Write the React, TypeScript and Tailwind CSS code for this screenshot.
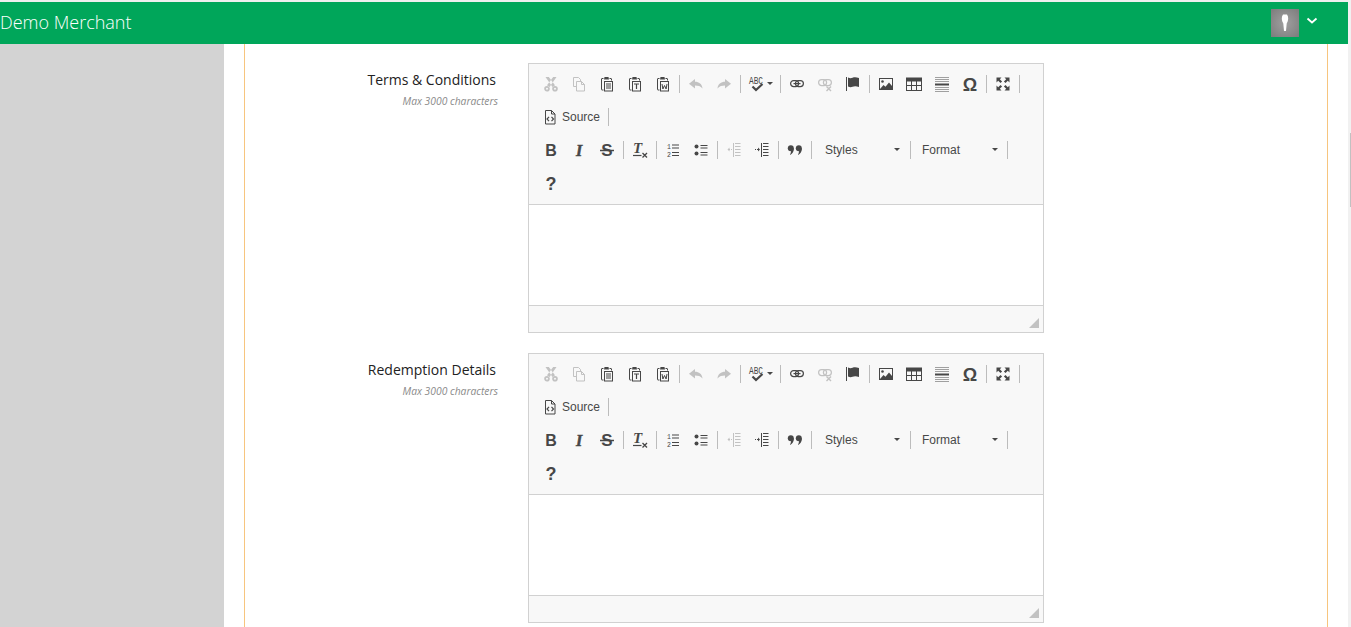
import type { ReactNode } from 'react'

const sans = { fontFamily: '"Liberation Sans", Arial, sans-serif' }

function Glyph({ children, off }: { children: ReactNode; off?: boolean }) {
  return (
    <svg
      viewBox="0 0 16 16"
      width={16}
      height={16}
      className={off ? 'overflow-visible text-[#474747] opacity-30' : 'overflow-visible text-[#474747]'}
      fill="none"
      stroke="none"
    >
      {children}
    </svg>
  )
}

function ClipBase() {
  return (
    <>
      <path d="M4.5 2.5H3a.5.5 0 0 0-.5.5v10.500a.5.5 0 0 0 .5.5h1.500M10.500 2.500H12a.5.5 0 0 1 .5.5v1.500" stroke="currentColor" strokeWidth="1" />
      <path d="M5 3.500 5.500 1h4l.5 2.500z" fill="currentColor" />
      <rect x="5.500" y="5.500" width="8" height="9.500" stroke="currentColor" strokeWidth="1" fill="none" />
    </>
  )
}

const icons: Record<string, ReactNode> = {
  cut: (
    <Glyph off>
      <path d="M2.500 1 9.500 11l2.500-1.700L5.800 1zM13.500 1 6.500 11 4 9.300 10.200 1z" fill="currentColor" />
      <circle cx="4" cy="12.800" r="1.900" stroke="currentColor" strokeWidth="1.800" />
      <circle cx="12" cy="12.800" r="1.900" stroke="currentColor" strokeWidth="1.800" />
    </Glyph>
  ),
  copy: (
    <Glyph off>
      <path d="M5.500 10.500h-3v-9h5l2 2v2M5.500 5.500h5l3 3v6.500h-8z" stroke="currentColor" strokeWidth="1" />
      <path d="M10.500 5.500v3h3" stroke="currentColor" strokeWidth="1" />
    </Glyph>
  ),
  paste: (
    <Glyph>
      <ClipBase />
      <path d="M7 8h5M7 10h5M7 12h5" stroke="currentColor" strokeWidth="1" />
    </Glyph>
  ),
  pasteText: (
    <Glyph>
      <ClipBase />
      <path d="M7 8h5M9.500 8v5" stroke="currentColor" strokeWidth="1.200" />
    </Glyph>
  ),
  pasteWord: (
    <Glyph>
      <ClipBase />
      <path d="M7 8l.9 5L9.500 9.500 11.100 13 12 8" stroke="currentColor" strokeWidth="1" />
    </Glyph>
  ),
  undo: (
    <Glyph off>
      <path d="M7 3 1 7.800 7 12.500V9.500c3 0 5.500.6 7.500 3C14 8 11 5.800 7 5.800z" fill="currentColor" />
    </Glyph>
  ),
  redo: (
    <Glyph off>
      <path d="M9 3l6 4.800L9 12.500V9.500c-3 0-5.500.6-7.500 3C2 8 5 5.800 9 5.800z" fill="currentColor" />
    </Glyph>
  ),
  spell: (
    <Glyph>
      <text x="0" y="8" fontSize="10" fill="currentColor" fontFamily="'Liberation Mono', monospace" textLength="14" lengthAdjust="spacingAndGlyphs">
        ABC
      </text>
      <path d="M3.500 10.500 7 14l6.500-6" stroke="currentColor" strokeWidth="2.200" />
    </Glyph>
  ),
  link: (
    <Glyph>
      <rect x="1.600" y="4.600" width="8" height="6" rx="3" stroke="currentColor" strokeWidth="1.200" />
      <rect x="6.400" y="4.600" width="8" height="6" rx="3" stroke="currentColor" strokeWidth="1.200" />
      <path d="M4.500 7.600h7" stroke="currentColor" strokeWidth="1.200" />
    </Glyph>
  ),
  unlink: (
    <Glyph off>
      <rect x="1.600" y="3.600" width="8" height="6" rx="3" stroke="currentColor" strokeWidth="1.200" />
      <rect x="6.400" y="3.600" width="8" height="6" rx="3" stroke="currentColor" strokeWidth="1.200" />
      <path d="M9.500 10.500l4.500 4.500M14 10.500l-4.500 4.500" stroke="currentColor" strokeWidth="1.400" />
    </Glyph>
  ),
  flag: (
    <Glyph>
      <path d="M1.500 1v14" stroke="currentColor" strokeWidth="1" />
      <path d="M3 1.500c2 .8 3 .8 4.500.2 2-.8 4-.6 6.500.3V11c-2.500-1-4.500-1.100-6.500-.3-1.500.6-2.500.6-4.500-.2z" fill="currentColor" />
    </Glyph>
  ),
  image: (
    <Glyph>
      <rect x="1.500" y="2.500" width="13" height="11" stroke="currentColor" strokeWidth="1" />
      <circle cx="4.500" cy="5.500" r="1.300" fill="currentColor" />
      <path d="M2 13l3.500-4 2 1.800L11 6.500l3 3.500v3.500z" fill="currentColor" />
    </Glyph>
  ),
  table: (
    <Glyph>
      <rect x="0.500" y="2" width="15" height="12.500" stroke="currentColor" strokeWidth="1" />
      <rect x="0.500" y="2" width="15" height="3.500" fill="currentColor" />
      <path d="M5.500 5v9M10.500 5v9M1 9.500h14" stroke="currentColor" strokeWidth="1" />
    </Glyph>
  ),
  hr: (
    <Glyph>
      <path d="M1 1.500h14M1 3.500h14M1 5.500h14M1 11.500h14M1 13.500h14M1 15.500h14" stroke="currentColor" strokeWidth="1" opacity="0.5" />
      <path d="M1 8.500h14" stroke="currentColor" strokeWidth="2" />
    </Glyph>
  ),
  omega: (
    <Glyph>
      <text x="8" y="14.500" textAnchor="middle" fontSize="18" fontWeight="700" fill="currentColor" fontFamily="'Liberation Sans', sans-serif">
        Ω
      </text>
    </Glyph>
  ),
  max: (
    <Glyph>
      <path d="M1.500 1.500h5l-1.700 1.700 2.300 2.300-1.600 1.600-2.300-2.300-1.700 1.700zM14.500 1.500v5l-1.700-1.700-2.300 2.300-1.600-1.600 2.300-2.300-1.700-1.700zM1.500 14.500v-5l1.700 1.700 2.300-2.300 1.600 1.600-2.300 2.300 1.700 1.700zM14.500 14.500h-5l1.700-1.700-2.300-2.300 1.600-1.600 2.300 2.300 1.700-1.700z" fill="currentColor" />
    </Glyph>
  ),
  source: (
    <Glyph>
      <path d="M3.500 1.500h6l3.500 3.500v10h-9.500zM9.500 1.500V5H13" stroke="currentColor" strokeWidth="1" />
      <path d="M7 7.800 5 10l2 2.200M9.500 7.800l2 2.200-2 2.200" stroke="currentColor" strokeWidth="1.200" />
    </Glyph>
  ),
  bold: (
    <Glyph>
      <text x="8" y="14" textAnchor="middle" fontSize="16" fontWeight="700" fill="currentColor" fontFamily="'Liberation Sans', sans-serif">
        B
      </text>
    </Glyph>
  ),
  italic: (
    <Glyph>
      <text x="8" y="13.500" textAnchor="middle" fontSize="16" fontWeight="700" fontStyle="italic" fill="currentColor" stroke="currentColor" strokeWidth="0.5" fontFamily="'Liberation Serif', serif">
        I
      </text>
    </Glyph>
  ),
  strike: (
    <Glyph>
      <text x="8" y="14" textAnchor="middle" fontSize="17" fontWeight="700" fill="currentColor" fontFamily="'Liberation Sans', sans-serif">
        S
      </text>
      <path d="M1 8.500h14" stroke="currentColor" strokeWidth="1.500" />
    </Glyph>
  ),
  clear: (
    <Glyph>
      <text x="5.500" y="11" textAnchor="middle" fontSize="15" fontWeight="700" fontStyle="italic" fill="currentColor" fontFamily="'Liberation Serif', serif">
        T
      </text>
      <path d="M1 13.500h8.500" stroke="currentColor" strokeWidth="1.200" />
      <path d="M10.500 11l4.500 4.500M15 11l-4.500 4.500" stroke="currentColor" strokeWidth="1.300" />
    </Glyph>
  ),
  ol: (
    <Glyph>
      <text x="2" y="7" fontSize="6.500" fill="currentColor" fontFamily="'Liberation Mono', monospace">1</text>
      <text x="2" y="14.500" fontSize="6.500" fill="currentColor" fontFamily="'Liberation Mono', monospace">2</text>
      <path d="M7 3h7M7 6h7M7 10.500h7M7 13.500h7" stroke="currentColor" strokeWidth="1.200" />
    </Glyph>
  ),
  ul: (
    <Glyph>
      <circle cx="3.500" cy="4.500" r="2" fill="currentColor" />
      <circle cx="3.500" cy="11.500" r="2" fill="currentColor" />
      <path d="M7.500 3.500h7M7.500 6h7M7.500 10.500h7M7.500 13h7" stroke="currentColor" strokeWidth="1.200" />
    </Glyph>
  ),
  outdent: (
    <Glyph off>
      <path d="M9 1.500h5.500M9 4.500h5.500M9 7.500h5.500M9 10.500h5.500M9 13.500h5.500M7.500 1v14" stroke="currentColor" strokeWidth="1" />
      <path d="M3 7.500h3" stroke="currentColor" strokeWidth="1" strokeDasharray="1 1" />
      <path d="M3.500 5.500 1.500 7.500l2 2z" fill="currentColor" />
    </Glyph>
  ),
  indent: (
    <Glyph>
      <path d="M9 1.500h5.500M9 4.500h5.500M9 7.500h5.500M9 10.500h5.500M9 13.500h5.500M7.500 1v14" stroke="currentColor" strokeWidth="1" />
      <path d="M1 7.500h3" stroke="currentColor" strokeWidth="1" strokeDasharray="1 1" />
      <path d="M4 5.500l2 2-2 2z" fill="currentColor" />
    </Glyph>
  ),
  quote: (
    <Glyph>
      <circle cx="3.800" cy="6.200" r="3" fill="currentColor" />
      <circle cx="11.800" cy="6.200" r="3" fill="currentColor" />
      <path d="M4.200 6.500h2.600c.1 3-1.300 5.600-4 6.500 1-1.500 1.500-3.500 1.400-6.500zM12.200 6.500h2.600c.1 3-1.300 5.600-4 6.500 1-1.500 1.500-3.500 1.400-6.500z" fill="currentColor" />
    </Glyph>
  ),
  help: (
    <Glyph>
      <text x="8" y="15" textAnchor="middle" fontSize="18" fontWeight="700" fill="currentColor" fontFamily="'Liberation Sans', sans-serif">
        ?
      </text>
    </Glyph>
  ),
}

function Btn({ name }: { name: string }) {
  return <span className="flex h-[27px] w-7 items-center justify-center">{icons[name]}</span>
}

function Sep() {
  return <span className="mx-[2px] h-[18px] w-px bg-[#bcbcbc]" />
}

function Caret() {
  return <span className="h-0 w-0 border-x-[3px] border-t-[3px] border-x-transparent border-t-[#474747]" />
}

function Row({ children }: { children: ReactNode }) {
  return <div className="flex h-[33px] items-center">{children}</div>
}

function Combo({ label, className }: { label: string; className: string }) {
  return (
    <span className={`flex h-[27px] items-center justify-between text-xs text-[#484848] ${className}`} style={sans}>
      {label}
      <Caret />
    </span>
  )
}

function Editor() {
  return (
    <div className="flex h-[270px] w-[516px] flex-col border border-[#d1d1d1] bg-white">
      <div className="h-[141px] border-b border-[#d1d1d1] bg-[#f8f8f8] pl-2 pt-[3px]">
        <Row>
          <Btn name="cut" />
          <Btn name="copy" />
          <Btn name="paste" />
          <Btn name="pasteText" />
          <Btn name="pasteWord" />
          <Sep />
          <Btn name="undo" />
          <Btn name="redo" />
          <Sep />
          <span className="flex h-[27px] w-[35px] items-center justify-center gap-[2px]">
            {icons.spell}
            <Caret />
          </span>
          <Sep />
          <Btn name="link" />
          <Btn name="unlink" />
          <Btn name="flag" />
          <Sep />
          <Btn name="image" />
          <Btn name="table" />
          <Btn name="hr" />
          <Btn name="omega" />
          <Sep />
          <Btn name="max" />
          <Sep />
        </Row>
        <Row>
          <span className="flex h-[27px] w-[69px] items-center gap-1 pl-[5px] text-xs text-[#484848]" style={sans}>
            {icons.source}
            Source
          </span>
          <Sep />
        </Row>
        <Row>
          <Btn name="bold" />
          <Btn name="italic" />
          <Btn name="strike" />
          <Sep />
          <Btn name="clear" />
          <Sep />
          <Btn name="ol" />
          <Btn name="ul" />
          <Sep />
          <Btn name="outdent" />
          <Btn name="indent" />
          <Sep />
          <Btn name="quote" />
          <Sep />
          <Combo label="Styles" className="w-[94px] pl-[11px] pr-2" />
          <Sep />
          <Combo label="Format" className="w-[92px] pl-[9px] pr-[7px]" />
          <Sep />
        </Row>
        <Row>
          <Btn name="help" />
        </Row>
      </div>
      <div className="h-[100px] bg-white" />
      <div className="relative flex-1 border-t border-[#d1d1d1] bg-[#f8f8f8]">
        <span className="absolute bottom-1 right-1 h-0 w-0 border-b-[10px] border-l-[10px] border-b-[#c2c2c2] border-l-transparent" />
      </div>
    </div>
  )
}

function Field({ label }: { label: string }) {
  return (
    <div className="flex gap-[30px]">
      <div className="w-[253px] pt-[5px] text-right">
        <div className="pr-[2px] text-sm leading-6 text-[#222]">{label}</div>
        <div className="mt-px text-[10.3px] italic leading-4 text-[#8a8a8a]">Max 3000 characters</div>
      </div>
      <Editor />
    </div>
  )
}

export default function App() {
  return (
    <div className="flex h-screen overflow-hidden bg-white" style={{ fontFamily: '"Open Sans", sans-serif' }}>
      <div className="flex min-w-0 flex-1 flex-col">
        <div className="h-[2px] bg-[#efefef]" />
        <header className="flex h-[42px] items-center justify-between bg-[#00a65a] text-white">
          <div className="pb-[2px] text-lg font-light">Demo Merchant</div>
          <div className="flex items-center gap-[7px] pr-[30px]">
            <span className="flex h-7 w-7 items-center justify-center bg-[radial-gradient(circle,#a0a0a0,#7c7c7c)]">
              <svg viewBox="0 0 10 20" width={10} height={20}>
                <path d="M3 1.500h4c1.800 2.500 1.500 6-.3 9l-.7 7.500H4l-.7-7.500c-1.800-3-2.100-6.500-.3-9z" fill="#fff" />
              </svg>
            </span>
            <svg viewBox="0 0 12 8" width={12} height={8} className="mb-[5px]">
              <path d="M1.500 1.500 6 5.500l4.500-4" stroke="#fff" strokeWidth="1.800" fill="none" />
            </svg>
          </div>
        </header>
        <div className="flex min-h-0 flex-1">
          <aside className="w-[224px] bg-[#d3d3d3]" />
          <main className="flex-1 px-5">
            <div className="flex h-full flex-col gap-5 border-x border-[#f7c57e] pt-[19px]">
              <Field label="Terms & Conditions" />
              <Field label="Redemption Details" />
            </div>
          </main>
        </div>
      </div>
      <div className="w-[3px] bg-[#f1f1f1]">
        <div className="ml-[2px] mt-[133px] h-[74px] w-px bg-[#c1c1c1]" />
      </div>
    </div>
  )
}
